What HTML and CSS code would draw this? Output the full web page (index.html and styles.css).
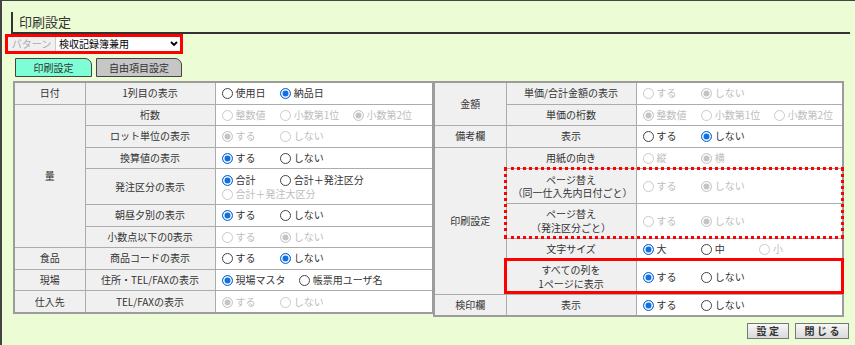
FILE: index.html
```html
<!DOCTYPE html>
<html lang="ja">
<head>
    <meta charset="UTF-8">
    <title>印刷設定</title>
    <link rel="stylesheet" href="styles.css">
</head>
<body>

    <h1 class="title">印刷設定</h1>

    <div class="pattern">
        <span class="pattern-label">パターン</span>
        <div class="pattern-select">
            <span>検収記録簿兼用</span>
            <svg width="8" height="6" viewBox="0 0 8 6"><polyline points="1,1 4,4 7,1" fill="none" stroke="#000" stroke-width="1.8"/></svg>
        </div>
    </div>

    <div class="tabs">
        <span class="tab active">印刷設定</span>
        <span class="tab wide">自由項目設定</span>
    </div>

    <div class="sheet">
        <table class="grid left">
            <colgroup><col class="c1"><col class="c2"><col></colgroup>
            <tr>
                <td class="head">日付</td>
                <td class="head">1列目の表示</td>
                <td class="val">
                    <label class="opt"><input type="radio" name="a1">使用日</label>
                    <label class="opt"><input type="radio" name="a1" checked>納品日</label>
                </td>
            </tr>
            <tr>
                <td class="head" rowspan="6">量</td>
                <td class="head">桁数</td>
                <td class="val">
                    <label class="opt off"><input type="radio" name="a2" disabled>整数値</label>
                    <label class="opt off"><input type="radio" name="a2" disabled>小数第1位</label>
                    <label class="opt off"><input type="radio" name="a2" disabled checked>小数第2位</label>
                </td>
            </tr>
            <tr>
                <td class="head">ロット単位の表示</td>
                <td class="val">
                    <label class="opt off"><input type="radio" name="a3" disabled checked>する</label>
                    <label class="opt off"><input type="radio" name="a3" disabled>しない</label>
                </td>
            </tr>
            <tr>
                <td class="head">換算値の表示</td>
                <td class="val">
                    <label class="opt"><input type="radio" name="a4" checked>する</label>
                    <label class="opt"><input type="radio" name="a4">しない</label>
                </td>
            </tr>
            <tr>
                <td class="head">発注区分の表示</td>
                <td class="val">
                    <label class="opt"><input type="radio" name="a5" checked>合計</label>
                    <label class="opt"><input type="radio" name="a5">合計＋発注区分</label><br>
                    <label class="opt off"><input type="radio" name="a5" disabled>合計＋発注大区分</label>
                </td>
            </tr>
            <tr>
                <td class="head">朝昼夕別の表示</td>
                <td class="val">
                    <label class="opt"><input type="radio" name="a6" checked>する</label>
                    <label class="opt"><input type="radio" name="a6">しない</label>
                </td>
            </tr>
            <tr>
                <td class="head">小数点以下の0表示</td>
                <td class="val">
                    <label class="opt off"><input type="radio" name="a7" disabled>する</label>
                    <label class="opt off"><input type="radio" name="a7" disabled checked>しない</label>
                </td>
            </tr>
            <tr>
                <td class="head">食品</td>
                <td class="head">商品コードの表示</td>
                <td class="val">
                    <label class="opt"><input type="radio" name="a8">する</label>
                    <label class="opt"><input type="radio" name="a8" checked>しない</label>
                </td>
            </tr>
            <tr>
                <td class="head">現場</td>
                <td class="head">住所・TEL/FAXの表示</td>
                <td class="val">
                    <label class="opt"><input type="radio" name="a9" checked>現場マスタ</label>
                    <label class="opt"><input type="radio" name="a9">帳票用ユーザ名</label>
                </td>
            </tr>
            <tr>
                <td class="head">仕入先</td>
                <td class="head">TEL/FAXの表示</td>
                <td class="val">
                    <label class="opt off"><input type="radio" name="a10" disabled checked>する</label>
                    <label class="opt off"><input type="radio" name="a10" disabled>しない</label>
                </td>
            </tr>
        </table>

        <div class="right-wrap">
            <table class="grid right">
                <colgroup><col class="c1r"><col class="c2"><col></colgroup>
                <tr>
                    <td class="head" rowspan="2">金額</td>
                    <td class="head">単価/合計金額の表示</td>
                    <td class="val">
                        <label class="opt off"><input type="radio" name="b1" disabled>する</label>
                        <label class="opt off"><input type="radio" name="b1" disabled checked>しない</label>
                    </td>
                </tr>
                <tr>
                    <td class="head">単価の桁数</td>
                    <td class="val">
                        <label class="opt off"><input type="radio" name="b2" disabled checked>整数値</label>
                        <label class="opt off"><input type="radio" name="b2" disabled>小数第1位</label>
                        <label class="opt off"><input type="radio" name="b2" disabled>小数第2位</label>
                    </td>
                </tr>
                <tr>
                    <td class="head">備考欄</td>
                    <td class="head">表示</td>
                    <td class="val">
                        <label class="opt"><input type="radio" name="b3">する</label>
                        <label class="opt"><input type="radio" name="b3" checked>しない</label>
                    </td>
                </tr>
                <tr>
                    <td class="head" rowspan="5">印刷設定</td>
                    <td class="head">用紙の向き</td>
                    <td class="val">
                        <label class="opt off"><input type="radio" name="b4" disabled>縦</label>
                        <label class="opt off"><input type="radio" name="b4" disabled checked>横</label>
                    </td>
                </tr>
                <tr>
                    <td class="head two">ページ替え<br>（同一仕入先内日付ごと）</td>
                    <td class="val">
                        <label class="opt off"><input type="radio" name="b5" disabled>する</label>
                        <label class="opt off"><input type="radio" name="b5" disabled checked>しない</label>
                    </td>
                </tr>
                <tr>
                    <td class="head two">ページ替え<br>（発注区分ごと）</td>
                    <td class="val">
                        <label class="opt off"><input type="radio" name="b6" disabled>する</label>
                        <label class="opt off"><input type="radio" name="b6" disabled checked>しない</label>
                    </td>
                </tr>
                <tr>
                    <td class="head">文字サイズ</td>
                    <td class="val">
                        <label class="opt"><input type="radio" name="b7" checked>大</label>
                        <label class="opt"><input type="radio" name="b7">中</label>
                        <label class="opt off"><input type="radio" name="b7" disabled>小</label>
                    </td>
                </tr>
                <tr>
                    <td class="head two">すべての列を<br>1ページに表示</td>
                    <td class="val">
                        <label class="opt"><input type="radio" name="b8" checked>する</label>
                        <label class="opt"><input type="radio" name="b8">しない</label>
                    </td>
                </tr>
                <tr>
                    <td class="head">検印欄</td>
                    <td class="head">表示</td>
                    <td class="val">
                        <label class="opt"><input type="radio" name="b9" checked>する</label>
                        <label class="opt"><input type="radio" name="b9">しない</label>
                    </td>
                </tr>
            </table>
            <!-- 注目枠 -->
            <div class="mark dotted"></div>
            <div class="mark solid"></div>
        </div>
    </div>

    <div class="actions">
        <button>設定</button>
        <button>閉じる</button>
    </div>

</body>
</html>
```

FILE: styles.css
```css
body {
    margin: 0;
    min-height: 100vh;
    box-sizing: border-box;
    background: #ecfcd5;
    border-top: 1px solid #444;
    border-left: 2px solid #444;
    font-family: "Noto Sans CJK JP", sans-serif;
    font-size: 10px;
    color: #333;
}
.title {
    margin: 11px 5px 0 9px;
    padding-left: 6px;
    height: 20px;
    line-height: 20px;
    border-left: 2px solid #333;
    border-bottom: 2px solid #333;
    font-size: 13px;
    font-weight: normal;
}
.pattern {
    display: flex;
    width: fit-content;
    margin-left: 3px;
    height: 14px;
    line-height: 14px;
    border: 3px solid #f00;
}
.pattern-label {
    width: 47px;
    background: #f0f0f0;
    color: #aaa;
    text-align: center;
}
.pattern-select {
    display: flex;
    align-items: center;
    justify-content: space-between;
    box-sizing: border-box;
    width: 125px;
    padding: 0 2px 0 3px;
    background: #fff;
    border-left: 1px solid #ccc;
    color: #000;
}
.tabs {
    display: flex;
    gap: 4px;
    margin: 4px 0 0 13px;
}
.tab {
    box-sizing: border-box;
    width: 77px;
    height: 19px;
    line-height: 17px;
    text-align: center;
    border: 1px solid #444;
    border-radius: 0 7px 0 0;
    background: #c6c6c6;
}
.tab.wide {
    width: 86px;
}
.tab.active {
    background: #7efed4;
}
.sheet {
    display: flex;
    align-items: flex-start;
    margin: 4px 0 0 11px;
}
.grid {
    table-layout: fixed;
    border-collapse: collapse;
    border: 2px solid #9c9c9c;
}
.grid.left {
    width: 421px;
}
.grid.right {
    width: 411px;
}
.c1 { width: 71px; }
.c1r { width: 72px; }
.c2 { width: 130px; }
.grid td {
    border: 1px solid #acacac;
    padding: 3.3px 6px;
    line-height: 14px;
    white-space: nowrap;
}
.grid .head {
    background: #f0f0f0;
    text-align: center;
}
.grid .two {
    line-height: 13.5px;
}
.grid .val {
    background: #fff;
}
.right-wrap {
    position: relative;
    flex: none;
    margin-left: -1px;
}
.opt {
    display: inline-block;
    min-width: 45px;
    margin-right: 11px;
}
.opt.off {
    color: #bdbdbd;
}
input[type=radio] {
    appearance: none;
    box-sizing: border-box;
    width: 11px;
    height: 11px;
    margin: 0 3px 0 0;
    vertical-align: -2px;
    border: 1px solid #444;
    border-radius: 50%;
    background: #fff;
}
input[type=radio]:checked {
    border: 1.5px solid #1170e0;
    background: #1170e0;
    box-shadow: inset 0 0 0 1.5px #fff;
}
input[type=radio]:disabled {
    border-color: #cacaca;
}
input[type=radio]:disabled:checked {
    background: #c4c4c4;
}
.mark {
    position: absolute;
    left: 71px;
    width: 340px;
    box-sizing: border-box;
}
.mark.dotted {
    top: 86px;
    height: 72px;
    border: 3px dotted #f00;
}
.mark.solid {
    top: 177px;
    height: 36px;
    border: 3px solid #f00;
}
.actions {
    display: flex;
    justify-content: flex-end;
    gap: 6px;
    margin: 6px 6px 0 0;
}
button {
    height: 16px;
    padding: 0 6px 0 9px;
    border: 1px solid #777;
    background: linear-gradient(#f7f7f7, #dadada);
    font: bold 10px/14px "Noto Sans CJK JP", sans-serif;
    letter-spacing: 2.5px;
    color: #333;
}
```
